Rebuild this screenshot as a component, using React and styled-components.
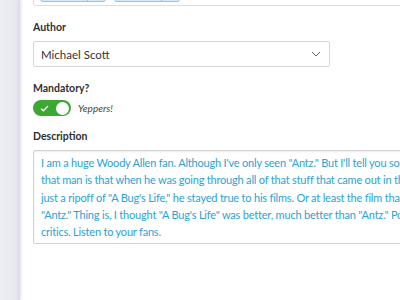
import React from 'react'
import styled, {createGlobalStyle} from 'styled-components'

const Global = createGlobalStyle`
  html, body {
    margin: 0;
    padding: 0;
    width: 400px;
    height: 300px;
    overflow: hidden;
    background: #fff;
  }
  body {
    font-family: Lato, "Noto Sans", sans-serif;
  }
`

const Page = styled.div`
  display: flex;
  width: 400px;
  height: 300px;
  overflow: hidden;
`

const Sidebar = styled.div`
  flex: 0 0 20px;
  background: linear-gradient(90deg, #eceef3 0%, #e6e8ee 80%, #d9dce3 100%);
  box-shadow: 1px 0 3px rgba(0, 0, 0, 0.12);
  z-index: 1;
`

const Panel = styled.div`
  flex: 0 0 560px;
  padding: 0 13px;
  display: flex;
  flex-direction: column;
`

const TagBox = styled.div`
  margin-top: -24px;
  height: 25px;
  border: 1px solid #dcdcdc;
  border-radius: 2px;
  padding: 0 6px 3px;
  display: flex;
  align-items: flex-end;
  gap: 8px;
`

const Tag = styled.div`
  display: flex;
  width: 66px;
  height: 18px;
  background: #d3e8f8;
  border: 1px solid #95c4ea;
  border-radius: 3px;
  box-sizing: border-box;
`

const TagText = styled.div`
  flex: 1;
  border-right: 1px solid #95c4ea;
`

const TagClose = styled.div`
  width: 17px;
`

const Label = styled.div`
  margin-top: ${p => p.top}px;
  font-size: 10.5px;
  font-weight: 700;
  color: #2f2f2f;
  line-height: 14px;
`

const Select = styled.div`
  margin-top: 7px;
  width: 297px;
  height: 26px;
  box-sizing: border-box;
  border: 1px solid #d6d6d6;
  border-radius: 2px;
  display: flex;
  align-items: center;
  justify-content: space-between;
  padding: 0 8px 0 7px;
  font-size: 11.5px;
  color: #333;
`

const Chevron = styled.svg`
  width: 10px;
  height: 6px;
`

const ToggleRow = styled.div`
  margin-top: 5px;
  display: flex;
  align-items: center;
  gap: 7px;
`

const Toggle = styled.div`
  width: 38px;
  height: 16px;
  border-radius: 8px;
  background: #3ca833;
  display: flex;
  align-items: center;
  justify-content: space-between;
  padding: 0 2px 0 7px;
  box-sizing: border-box;
`

const Knob = styled.div`
  width: 13px;
  height: 13px;
  border-radius: 50%;
  background: #fff;
`

const Hint = styled.span`
  font-size: 10px;
  font-style: italic;
  color: #444;
`

const TextArea = styled.div`
  margin-top: 7px;
  height: 94px;
  box-sizing: border-box;
  border: 1px solid #d2d2d2;
  border-radius: 2px;
  box-shadow: inset 0 1px 2px rgba(0, 0, 0, 0.08);
  padding: 3px 7px;
  font-size: 11px;
  letter-spacing: -0.2px;
  line-height: 17.3px;
  color: #2aa3d6;
  white-space: nowrap;
`

const lines = [
  'I am a huge Woody Allen fan. Although I\'ve only seen "Antz." But I\'ll tell you something about',
  'that man is that when he was going through all of that stuff that came out in the news, he didn\'t make',
  'just a ripoff of "A Bug\'s Life," he stayed true to his films. Or at least the film that I saw,',
  '"Antz." Thing is, I thought "A Bug\'s Life" was better, much better than "Antz." Poor',
  'critics. Listen to your fans.',
]

export default function App() {
  return (
    <Page>
      <Global />
      <Sidebar />
      <Panel>
        <TagBox>
          <Tag><TagText /><TagClose /></Tag>
          <Tag><TagText /><TagClose /></Tag>
        </TagBox>
        <Label top={14}>Author</Label>
        <Select>
          <span>Michael Scott</span>
          <Chevron viewBox="0 0 10 6">
            <path d="M1 1l4 4 4-4" fill="none" stroke="#666" strokeWidth="1" />
          </Chevron>
        </Select>
        <Label top={14}>Mandatory?</Label>
        <ToggleRow>
          <Toggle>
            <svg width="9" height="7" viewBox="0 0 9 7">
              <path d="M1 3.6l2.3 2.2L8 1" fill="none" stroke="#fff" strokeWidth="1.3" />
            </svg>
            <Knob />
          </Toggle>
          <Hint>Yeppers!</Hint>
        </ToggleRow>
        <Label top={13}>Description</Label>
        <TextArea>
          {lines.map((l, i) => <div key={i}>{l}</div>)}
        </TextArea>
      </Panel>
    </Page>
  )
}
